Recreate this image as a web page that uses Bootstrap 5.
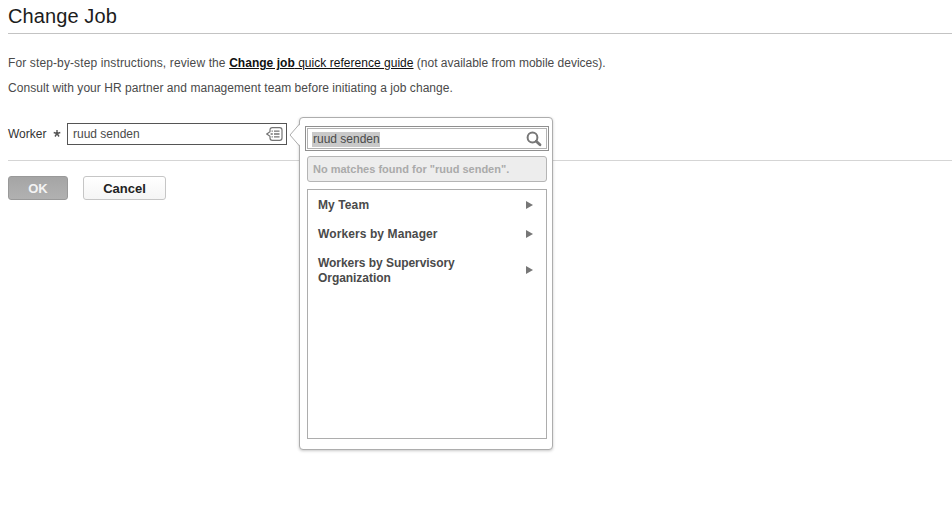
<!DOCTYPE html>
<html lang="en">
<head>
<meta charset="utf-8">
<meta name="viewport" content="width=device-width, initial-scale=1">
<title>Change Job</title>
<link href="https://cdn.jsdelivr.net/npm/bootstrap@5.3.0/dist/css/bootstrap.min.css" rel="stylesheet">
<style>
body{font-family:"Liberation Sans",Arial,sans-serif;font-size:12px;line-height:15px;color:#4a4a4a;background:#fff}
.page-title{font-size:20px;line-height:24px;font-weight:400;letter-spacing:.1px;color:#1c1c1c;height:34px;padding-top:4px;border-bottom:1px solid #c3c3c3}
.intro{padding-top:22px}
.intro p{margin-bottom:10px}
.lead-in{letter-spacing:.12px}
.consult{letter-spacing:.05px}
.guide{color:#111;letter-spacing:.03px;text-decoration:underline;text-underline-offset:1px}
.guide:hover{color:#111}
.worker-row{height:22px;margin-top:27px;color:#333}
.worker-label{width:45px}
.required{width:14px;padding-bottom:2px}
.worker-input{width:220px;height:22px;border:1px solid #555;padding:0 3px 0 5px;color:#4a4a4a}
.divider{margin-top:15px;border-top:1px solid #d5d5d5}
.actions{gap:15px;padding-top:15px}
.action{height:24px;font-size:13px;line-height:15px;font-weight:700;padding:0;border-radius:3px}
.action-ok,.action-ok:disabled{width:60px;color:#f4f4f4;background:linear-gradient(#a5a5a5,#b1b1b1);border-color:#999;opacity:1}
.action-cancel{width:83px;color:#222;background:linear-gradient(#fff,#f5f5f5);border-color:#c6c6c6}
.picker{left:232px;top:-6px;width:254px;height:333px;border:1px solid #adadad;border-radius:4px;padding:8px 5px 0;box-shadow:0 1px 3px rgba(0,0,0,.22);z-index:5}
.picker-arrow{left:-11px;top:4px}
.search-box{width:244px;height:25px;border:1px solid #8f8f8f;padding:1px}
.search-inner{border:1px solid #b3b3b3;padding:0 4px 0 4px}
.picked{background:#c9c9c9;margin-top:2px;padding:0 0 0 1px;color:#4a4a4a;line-height:15px}
.notice{width:240px;height:26px;margin:5px 0 0 2px;background:#ededed;border:1px solid #b5b5b5;border-radius:3px;color:#aaa;font-size:11px;font-weight:700;padding-left:5px}
.options{width:240px;height:250px;margin:7px 0 0 2px;border:1px solid #adadad;border-radius:0;background:#fff}
.option{border:0;padding:8px 13px 6px 10px;font-weight:700;color:#4a4a4a;font-size:12px;line-height:15px;letter-spacing:.1px;background:none}
.option:last-child{letter-spacing:-.05px}
.option svg{margin-bottom:2px}
</style>
</head>
<body>
<main class="ps-2 min-vh-100">
  <h1 class="page-title mb-0">Change Job</h1>
  <div class="intro">
    <p><span class="lead-in">For step-by-step instructions, review the </span><a class="guide" href="#"><b>Change job</b> quick reference guide</a> (not available from mobile devices).</p>
    <p class="consult mb-0">Consult with your HR partner and management team before initiating a job change.</p>
  </div>
  <div class="worker-row d-flex align-items-center">
    <label class="worker-label" for="worker">Worker</label>
    <span class="required d-flex">
      <svg width="9" height="9" viewBox="0 0 9 9" stroke="#555" stroke-width="1.4" fill="none"><path d="M4 4.500V1M4 4.500L.7 3.500M4 4.500L7.300 3.500M4 4.500L2 7.500M4 4.500L6 7.500"/></svg>
    </span>
    <div class="position-relative">
      <div id="worker" class="worker-input d-flex align-items-center justify-content-between bg-white">
        <span>ruud senden</span>
        <svg width="17" height="14" viewBox="0 0 17 14" fill="none" stroke="#747474"><path d="M4 4.800V3Q4 .7 6.300 .7h7.400Q16 .7 16 3v8q0 2.300-2.300 2.300H6.300Q4 13.300 4 11V9.200L.8 7z" stroke-width="1.200"/><path d="M8 4.200h5.500M8 7h5.500M8 9.800h5.500M5.600 4.200h1.200M4.600 7h2.200M5.600 9.800h1.200" stroke-width="1.300"/></svg>
      </div>
      <section class="picker position-absolute bg-white">
        <svg class="picker-arrow position-absolute" width="12" height="26" viewBox="0 0 12 26"><path d="M12 0L11 2.500L1 13L11 23.500L12 26z" fill="#fff"/><path d="M10.500 2L1 13L10.500 24" fill="none" stroke="#adadad"/></svg>
        <div class="search-box d-flex">
          <div class="search-inner d-flex flex-fill align-items-center justify-content-between">
            <span class="picked">ruud senden</span>
            <svg width="16" height="16" viewBox="0 0 16 16" fill="none" stroke="#777"><circle cx="6.500" cy="6.500" r="4.900" stroke-width="2"/><path d="M10.200 10.200L14 13.800" stroke-width="2.800" stroke-linecap="round"/></svg>
          </div>
        </div>
        <div class="notice d-flex align-items-center">No matches found for "ruud senden".</div>
        <div class="options list-group">
          <a class="option list-group-item d-flex align-items-center justify-content-between" href="#"><span>My Team</span><svg width="7" height="8" viewBox="0 0 7 8"><path d="M0 0L7 4L0 8z" fill="#777"/></svg></a>
          <a class="option list-group-item d-flex align-items-center justify-content-between" href="#"><span>Workers by Manager</span><svg width="7" height="8" viewBox="0 0 7 8"><path d="M0 0L7 4L0 8z" fill="#777"/></svg></a>
          <a class="option list-group-item d-flex align-items-center justify-content-between" href="#"><span>Workers by Supervisory<br>Organization</span><svg width="7" height="8" viewBox="0 0 7 8"><path d="M0 0L7 4L0 8z" fill="#777"/></svg></a>
        </div>
      </section>
    </div>
  </div>
  <div class="divider"></div>
  <div class="actions d-flex">
    <button class="btn action action-ok" type="button" disabled>OK</button>
    <button class="btn action action-cancel" type="button">Cancel</button>
  </div>
</main>
<script src="https://cdn.jsdelivr.net/npm/bootstrap@5.3.0/dist/js/bootstrap.bundle.min.js"></script>
</body>
</html>
